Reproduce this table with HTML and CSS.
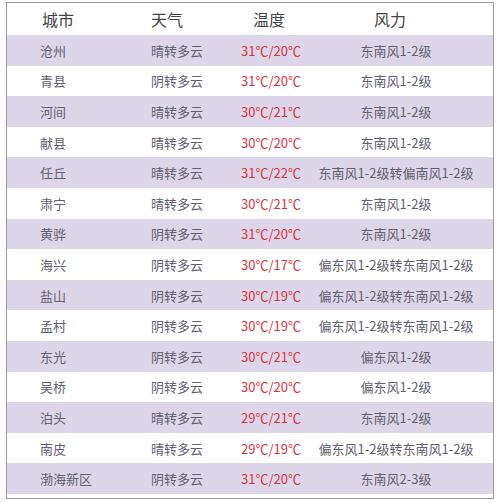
FILE: index.html
```html
<!DOCTYPE html>
<html lang="zh-CN">
<head>
<meta charset="utf-8">
<title>天气</title>
<link rel="stylesheet" href="styles.css">
</head>
<body>
<div class="frame">
  <div class="row head">
    <div class="c city">城市</div>
    <div class="c wx">天气</div>
    <div class="c temp">温度</div>
    <div class="c wind">风力</div>
  </div>
  <div class="row alt"><div class="c city">沧州</div><div class="c wx">晴转多云</div><div class="c temp">31℃/20℃</div><div class="c wind">东南风1-2级</div></div>
  <div class="row"><div class="c city">青县</div><div class="c wx">阴转多云</div><div class="c temp">31℃/20℃</div><div class="c wind">东南风1-2级</div></div>
  <div class="row alt"><div class="c city">河间</div><div class="c wx">晴转多云</div><div class="c temp">30℃/21℃</div><div class="c wind">东南风1-2级</div></div>
  <div class="row"><div class="c city">献县</div><div class="c wx">晴转多云</div><div class="c temp">30℃/20℃</div><div class="c wind">东南风1-2级</div></div>
  <div class="row alt"><div class="c city">任丘</div><div class="c wx">晴转多云</div><div class="c temp">31℃/22℃</div><div class="c wind">东南风1-2级转偏南风1-2级</div></div>
  <div class="row"><div class="c city">肃宁</div><div class="c wx">晴转多云</div><div class="c temp">30℃/21℃</div><div class="c wind">东南风1-2级</div></div>
  <div class="row alt"><div class="c city">黄骅</div><div class="c wx">阴转多云</div><div class="c temp">31℃/20℃</div><div class="c wind">东南风1-2级</div></div>
  <div class="row"><div class="c city">海兴</div><div class="c wx">阴转多云</div><div class="c temp">30℃/17℃</div><div class="c wind">偏东风1-2级转东南风1-2级</div></div>
  <div class="row alt"><div class="c city">盐山</div><div class="c wx">阴转多云</div><div class="c temp">30℃/19℃</div><div class="c wind">偏东风1-2级转东南风1-2级</div></div>
  <div class="row"><div class="c city">孟村</div><div class="c wx">阴转多云</div><div class="c temp">30℃/19℃</div><div class="c wind">偏东风1-2级转东南风1-2级</div></div>
  <div class="row alt"><div class="c city">东光</div><div class="c wx">阴转多云</div><div class="c temp">30℃/21℃</div><div class="c wind">偏东风1-2级</div></div>
  <div class="row"><div class="c city">吴桥</div><div class="c wx">阴转多云</div><div class="c temp">30℃/20℃</div><div class="c wind">偏东风1-2级</div></div>
  <div class="row alt"><div class="c city">泊头</div><div class="c wx">晴转多云</div><div class="c temp">29℃/21℃</div><div class="c wind">东南风1-2级</div></div>
  <div class="row"><div class="c city">南皮</div><div class="c wx">晴转多云</div><div class="c temp">29℃/19℃</div><div class="c wind">偏东风1-2级转东南风1-2级</div></div>
  <div class="row alt"><div class="c city">渤海新区</div><div class="c wx">阴转多云</div><div class="c temp">31℃/20℃</div><div class="c wind">东南风2-3级</div></div>
</div>
</body>
</html>
```

FILE: styles.css
```css
html, body {
  margin: 0;
  padding: 0;
  background: #ffffff;
}
body {
  padding: 2px 6px 0 6px;
  font-family: "Noto Sans CJK SC", "Noto Sans", sans-serif;
}
.frame {
  box-sizing: border-box;
  width: 488px;
  height: 497px;
  border: 1px solid #9a9a9a;
  background: #fff;
}
.row {
  display: grid;
  grid-template-columns: 144px 79px 82px 168px;
  align-items: center;
  height: 30.6px;
  font-size: 13px;
  color: #625f70;
  line-height: 1;
}
.row.alt {
  background: #ddd6e9;
}
.row.head {
  height: 32px;
  font-size: 16px;
  color: #444444;
}
.c.city {
  padding-left: 33px;
}
.row.head .c.city {
  padding-left: 35px;
}
.c.temp {
  text-align: center;
  color: #d8343d;
}
.row.head .c.temp {
  color: #444444;
  padding-right: 4px;
}
.c.wind {
  text-align: center;
  white-space: nowrap;
}
.row.head .c.wind {
  padding-right: 12px;
}
```
